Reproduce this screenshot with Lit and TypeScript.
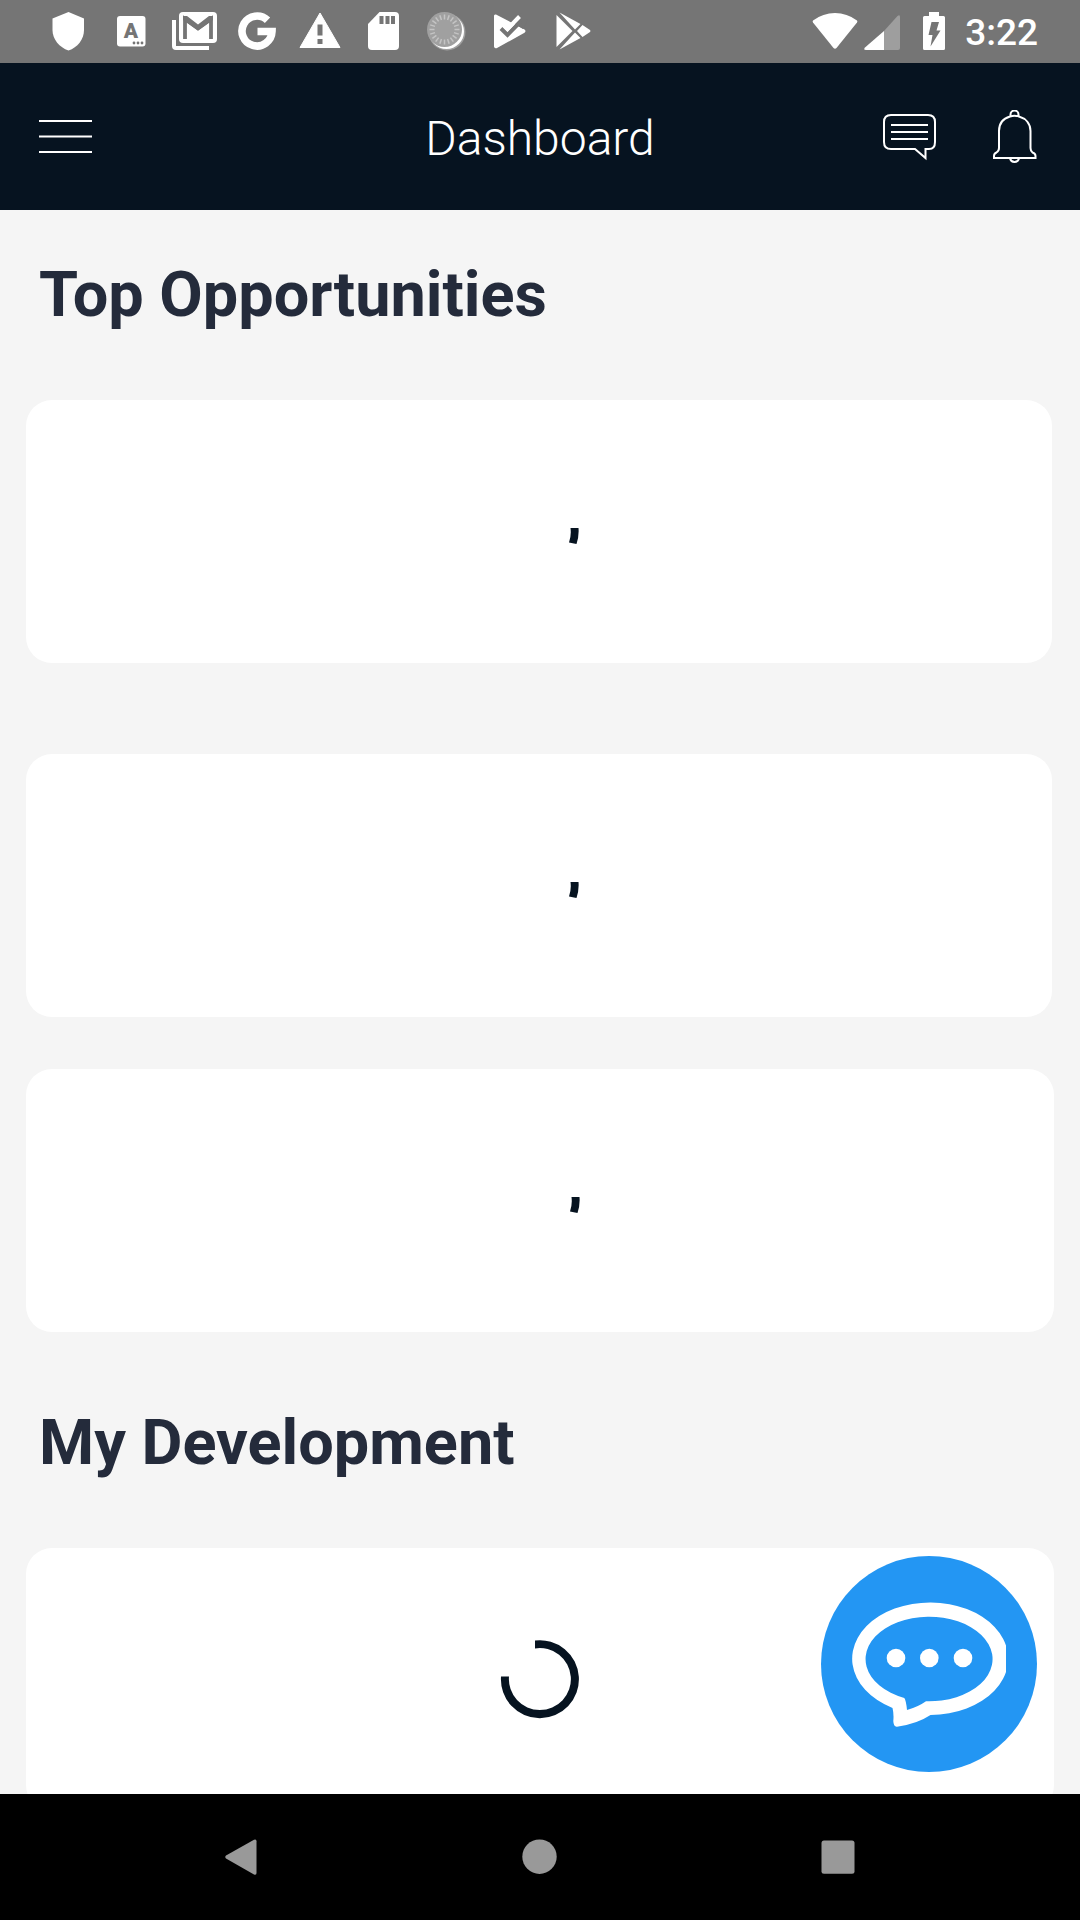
import { LitElement, html, css, svg } from "lit";
import { customElement, property } from "lit/decorators.js";

const icon = (body: unknown) => html`<svg width="48" height="48" viewBox="0 0 48 48" aria-hidden="true">${body}</svg>`;

const ticks = Array.from({ length: 20 }, (_, i) => i * 18);

const notifications = [
  svg`<path fill="#fff" d="M24.500 5 40 11.500V23C40 32.500 33.500 40.500 24.500 43.500 15.500 40.500 8.500 32.500 8.500 23V11.500Z"/>`,
  svg`<rect x="10" y="9" width="28.500" height="30.500" rx="3" fill="#fff"/>
    <text class="glyph" x="24" y="31" text-anchor="middle">A</text>
    <g fill="#757575"><circle cx="27" cy="36" r="1.400"/><circle cx="31" cy="36" r="1.400"/><circle cx="35" cy="36" r="1.400"/></g>`,
  svg`<path d="M4 13V39a2 2 0 0 0 2 2H39" fill="none" stroke="#fff" stroke-width="4"/>
    <rect x="9" y="5" width="38" height="31" rx="4" fill="#fff"/>
    <path d="M15 32V12L28 21.500 41 12V32" fill="none" stroke="#757575" stroke-width="3.800"/>
    <path d="M13 9h4l11 8.500L39 9h4v4L28 23.500 13 13Z" fill="#757575"/>`,
  svg`<path d="M34.500 13.300A15 15 0 1 0 39 24.500H24.500" fill="none" stroke="#fff" stroke-width="7.600"/>`,
  svg`<path d="M24 6 44 40.500H4Z" fill="#fff" stroke="#fff" stroke-width="1" stroke-linejoin="round"/>
    <path d="M21.500 17.500h5v11h-5zM21.500 32h5v5h-5z" fill="#757575"/>`,
  svg`<path d="M20.500 5H36a4 4 0 0 1 4 4V39a4 4 0 0 1-4 4H13a4 4 0 0 1-4-4V17Z" fill="#fff"/>
    <path d="M20.500 9h4v8h-4zM26.500 9h4v8h-4zM32 9h4v8h-4z" fill="#757575"/>`,
  svg`<circle cx="25" cy="25" r="18.500" fill="#a0a0a0"/><circle cx="24.500" cy="24.500" r="17.500" fill="#fff"/>
    <circle cx="22.500" cy="22.500" r="17.500" fill="#a0a0a0"/>
    <g stroke="#c4c4c4" stroke-width="1.500">${ticks.map(
      (a) => svg`<path d="M22.500 7.500v5" transform="rotate(${a} 22.500 22.500)"/>`,
    )}</g>`,
  svg`<path d="M11 7.500 39.500 22.500a1.800 1.800 0 0 1 0 3.200L12 41a2 2 0 0 1-3-1.500V9a1.500 1.500 0 0 1 2-1.500Z" fill="#fff"/>
    <path d="M25 14 35 6l8 7-5 9Z" fill="#757575"/>
    <path d="M16 21.500 22.500 28 36 14" fill="none" stroke="#757575" stroke-width="4"/>
    <path d="M17 16.500 22.500 22 34.500 9.500" fill="none" stroke="#fff" stroke-width="4"/>`,
  svg`<path d="M8.500 8V40L24.500 24ZM11.500 5.500 32.500 17 27 22.500ZM11.500 42.500 32.500 31 27 25.500ZM34.500 18 42 23q1 1 0 2L34.500 30 29 24Z" fill="#fff"/>`,
];

@customElement("loading-card")
export class LoadingCard extends LitElement {
  @property() phase: "start" | "open" = "start";

  static styles = css`
    :host {
      display: flex;
      align-items: center;
      justify-content: center;
      height: 263px;
      border-radius: 26px;
      background: #fff;
    }
    .spinner {
      display: block;
      fill: #061320;
    }
  `;

  render() {
    return html`<svg class="spinner" width="80" height="80" viewBox="-40 -40 80 80" role="img" aria-label="Loading">
      ${this.phase === "start"
        ? svg`<path d="M31.500 -4H39.500A39 39 0 0 1 37.500 12L30 10.500A31 31 0 0 0 31.500 -4Z"/>`
        : svg`<path d="M-5 -39.500A39 39 0 1 1 -39 -3.500H-31A31 31 0 1 0 -5 -31.500Z"/>`}
    </svg>`;
  }
}

@customElement("app-root")
export class AppRoot extends LitElement {
  static styles = css`
    :host {
      display: flex;
      flex-direction: column;
      height: 100vh;
      background: #f5f5f5;
      font-family: Roboto, "Liberation Sans", sans-serif;
    }
    svg {
      display: block;
    }
    button {
      display: block;
      padding: 0;
      border: 0;
      background: none;
      cursor: pointer;
    }
    .status {
      display: flex;
      flex: none;
      justify-content: space-between;
      height: 56px;
      padding: 7px 42px 0 44px;
      background: #757575;
      color: #fff;
    }
    .notices {
      display: flex;
      gap: 15px;
    }
    .system {
      display: flex;
    }
    .battery {
      margin-left: 3px;
    }
    .clock {
      margin-left: 7px;
      font-size: 37px;
      font-weight: 500;
      line-height: 52px;
    }
    .glyph {
      font: 900 21px Roboto, sans-serif;
      fill: #757575;
    }
    .bar {
      display: grid;
      flex: none;
      grid-template-columns: 1fr auto 1fr;
      align-items: center;
      height: 147px;
      background: #061320;
      color: #fff;
    }
    .bar svg {
      fill: none;
      stroke: #fff;
      stroke-width: 2;
    }
    .menu {
      justify-self: start;
      margin-left: 39px;
    }
    .title {
      margin: 0;
      padding-top: 4px;
      font-size: 48px;
      font-weight: 300;
      line-height: 60px;
    }
    .actions {
      display: flex;
      justify-self: end;
      gap: 56px;
      margin-right: 43px;
    }
    .body {
      position: relative;
      flex: 1;
      min-height: 0;
    }
    .scroll {
      height: 100%;
      overflow-y: auto;
      scrollbar-width: none;
    }
    .section {
      padding: 46px 26px 0;
    }
    .section + .section {
      padding-top: 72px;
    }
    .heading {
      margin: 0 13px 66px;
      color: #242b3b;
      font-size: 63px;
      font-weight: 700;
      line-height: 78px;
    }
    .featured {
      display: grid;
      gap: 91px;
      margin: 0 2px 52px 0;
    }
    .chat {
      position: absolute;
      right: 43px;
      bottom: 22px;
      display: grid;
      place-items: center;
      width: 216px;
      height: 216px;
      border-radius: 50%;
      background: #2396f3;
    }
    .nav {
      flex: none;
      background: #000;
    }
    .keys {
      display: grid;
      grid-template-columns: repeat(3, 1fr);
      place-items: center;
      max-width: 894px;
      height: 126px;
      margin: 0 auto;
    }
    .keys svg {
      fill: #999;
    }
  `;

  render() {
    return html`
      <div class="status">
        <div class="notices">${notifications.map((n) => icon(n))}</div>
        <div class="system">
          ${icon(svg`<path d="M2 15.500Q1.200 14.500 2 13.500Q12 6 24 6T46 13.500Q46.800 14.500 46 15.500L25.500 41q-1.500 1.500-3 0Z" fill="#fff"/>`)}
          ${icon(svg`<path d="M41 10V41q0 2-2 2H25V24L38.500 9Q41 7 41 10Z" fill="#9e9e9e"/><path d="M25 24V43H7q-3 0-1-2.500Z" fill="#fff"/>`)}
          <span class="battery">
            ${icon(svg`<path d="M19 5H29V9H33.500a1.500 1.500 0 0 1 1.500 1.500V41.500A1.500 1.500 0 0 1 33.500 43H14.500A1.500 1.500 0 0 1 13 41.500V10.500A1.500 1.500 0 0 1 14.500 9H19Z" fill="#fff"/><path d="M21.500 15H29L26.500 23.500H30.500L20.500 39.500 22.500 28H18.500Z" fill="#757575"/>`)}
          </span>
          <time class="clock">3:22</time>
        </div>
      </div>

      <header class="bar">
        <button class="menu" type="button" aria-label="Menu">
          <svg width="53" height="53" viewBox="0 0 53 53"><path d="M0 11H53M0 26.500H53M0 42H53" /></svg>
        </button>
        <h1 class="title">Dashboard</h1>
        <div class="actions">
          <button type="button" aria-label="Messages">
            <svg width="54" height="53" viewBox="0 0 54 53">
              <path d="M8 5H45Q52 5 52 12V32Q52 39 46 39H42.500V48L32 39H8Q1 39 1 32V12Q1 5 8 5Z" />
              <path d="M8 15H45M8 22H45M8 29H45" />
            </svg>
          </button>
          <button type="button" aria-label="Notifications">
            <svg width="44" height="53" viewBox="0 0 44 53">
              <path d="M17.500 6.500V4.500a4 4 0 0 1 8 0V6.500" />
              <path d="M17 6.500Q21.500 5 26 6.500C33 8.500 37.500 14 37.500 21V38Q37.500 41 39.500 42.500Q42.500 43.500 42.500 46V48H1V46Q1 43.500 3.500 42.500Q6 41 6 38V21C6 14 10 8.500 17 6.500Z" />
              <path d="M17 48.500Q18 52 21.500 52T26 48.500" />
            </svg>
          </button>
        </div>
      </header>

      <div class="body">
        <main class="scroll">
          <section class="section">
            <h2 class="heading">Top Opportunities</h2>
            <div class="featured">
              <loading-card></loading-card>
              <loading-card></loading-card>
            </div>
            <loading-card></loading-card>
          </section>
          <section class="section">
            <h2 class="heading">My Development</h2>
            <loading-card phase="open"></loading-card>
          </section>
        </main>
        <button class="chat" type="button" aria-label="Chat">
          <svg width="154" height="126" viewBox="31 45 154 126" fill="#fff">
            <path
              fill-rule="evenodd"
              d="M109.500 159A78 56.300 0 1 0 71.500 152Q73 158 72.300 165Q72.500 171 76 170.700Q96 168 109.500 159ZM105 145.300A63.500 42.300 0 1 0 83.300 142Q85 144 86 154Q97 151 105 145.300Z"
            />
            <circle cx="75" cy="102" r="9.300" />
            <circle cx="108.300" cy="102" r="9.300" />
            <circle cx="142" cy="102" r="9.300" />
          </svg>
        </button>
      </div>

      <nav class="nav" aria-label="System">
        <div class="keys">
          <button type="button" aria-label="Back">
            ${icon(svg`<path d="M8 22.500 36 6.700q2.500-1 2.500 1.500V40q0 2.500-2.500 1.500L8 25.500q-1.500-1.500 0-3Z"/>`)}
          </button>
          <button type="button" aria-label="Home">${icon(svg`<circle cx="23.500" cy="23.700" r="17.200"/>`)}</button>
          <button type="button" aria-label="Recent apps">
            ${icon(svg`<rect x="7.500" y="7.500" width="33" height="33.300" rx="2.500"/>`)}
          </button>
        </div>
      </nav>
    `;
  }
}
